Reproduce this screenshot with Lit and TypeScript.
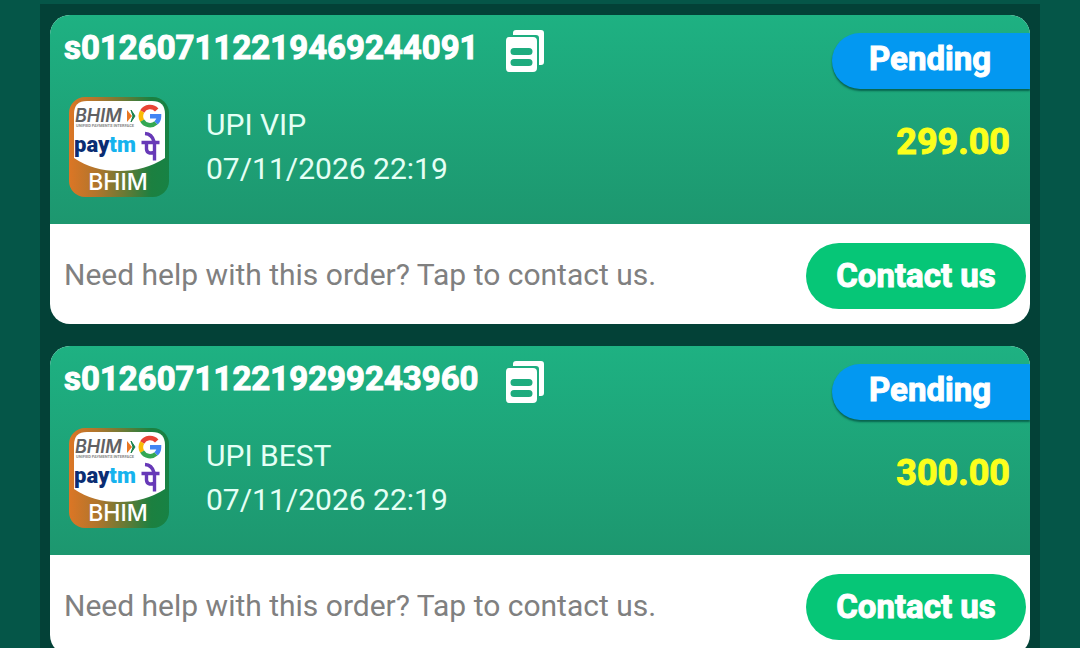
import { LitElement, html, css } from "lit";
import { customElement, property } from "lit/decorators.js";

interface Order {
  id: string;
  channel: string;
  time: string;
  amount: string;
  status: string;
}

const ORDERS: Order[] = [
  { id: "s012607112219469244091", channel: "UPI VIP", time: "07/11/2026 22:19", amount: "299.00", status: "Pending" },
  { id: "s012607112219299243960", channel: "UPI BEST", time: "07/11/2026 22:19", amount: "300.00", status: "Pending" },
];

@customElement("upi-logo")
class UpiLogo extends LitElement {
  static styles = css`
    :host { display: block; width: 100px; height: 100px; }
    .logo { display: block; width: 100%; height: 100%; }
    .mark { font: italic 600 18px "Inter", sans-serif; fill: #606163; }
    .tiny { font: 700 4px "Roboto", sans-serif; fill: #8a8a8a; }
    .paytm { font: 900 22px "Roboto", sans-serif; fill: #0a2d73; }
    .paytm-light { fill: #16b3ee; }
    .name { font: 500 23px "Inter", sans-serif; fill: #fff; }
  `;

  render() {
    return html`
      <svg class="logo" viewBox="0 0 100 100" role="img" aria-label="UPI">
        <defs>
          <linearGradient id="frame" x1="0" y1="0" x2="1" y2="0">
            <stop offset="0" stop-color="#dc7625" />
            <stop offset="0.28" stop-color="#b0752c" />
            <stop offset="0.55" stop-color="#6a7a35" />
            <stop offset="0.82" stop-color="#1c8040" />
            <stop offset="1" stop-color="#178244" />
          </linearGradient>
        </defs>
        <rect width="100" height="100" rx="16" fill="url(#frame)" />
        <path d="M18 4H83Q96 4 96 17V61Q76 74 50 74T5 61V17Q5 4 18 4Z" fill="#fff" />
        <text class="mark" x="6" y="25">BHIM</text>
        <path d="M58 13l5 6-5 6z" fill="#e87722" />
        <path d="M62 13l4 6-4 6 2-6z" fill="#16804a" stroke="#16804a" />
        <text class="tiny" x="7" y="30">UNIFIED PAYMENTS INTERFACE</text>
        <g fill="none" stroke-width="4.6">
          <path d="M87.700 13A9 9 0 0 0 73.200 14.500" stroke="#e84335" />
          <path d="M73.200 14.500A9 9 0 0 0 73.200 23.700" stroke="#fabb05" />
          <path d="M73.200 23.700A9 9 0 0 0 87 25.900" stroke="#34a853" />
          <path d="M87 25.900A9 9 0 0 0 90 19.200H81" stroke="#4285f4" />
        </g>
        <text class="paytm" x="5" y="55">pay<tspan class="paytm-light">tm</tspan></text>
        <path
          d="M76 36.500Q83 37 85 44.500M72.500 45.500H90.500M77.500 46V52Q78 57.500 85.500 55.500M85.500 45V63.500"
          fill="none" stroke="#6739b7" stroke-width="3.4"
        />
        <text class="name" x="49" y="93" text-anchor="middle">BHIM</text>
      </svg>
    `;
  }
}

@customElement("order-card")
class OrderCard extends LitElement {
  @property({ attribute: false }) order!: Order;

  static styles = css`
    :host { display: block; }
    .card { border-radius: 20px; overflow: hidden; background: #fff; }
    .head {
      display: flex;
      justify-content: space-between;
      height: 209px;
      background: linear-gradient(#1eb182, #1d976f);
      color: #fff;
    }
    .main { padding: 14px 0 0 14px; }
    .title { display: flex; align-items: flex-start; gap: 26px; height: 44px; }
    .strong { font-weight: 700; -webkit-text-stroke: 1px currentColor; }
    .id { margin: 0; font-size: 33px; line-height: 38px; }
    .copy {
      display: block;
      padding: 1px 0;
      border: 0;
      background: none;
      color: inherit;
      cursor: pointer;
    }
    .copy-icon { display: block; width: 40px; height: 42px; }
    .info { display: flex; align-items: center; gap: 37px; padding: 24px 5px 0; }
    .lines { font-size: 30px; line-height: 44px; color: #e4fff5; }
    .line { margin: 0; }
    .side { display: flex; flex-direction: column; align-items: flex-end; gap: 33px; padding-top: 18px; }
    .status {
      box-sizing: border-box;
      min-width: 198px;
      height: 56px;
      padding: 0 38px 0 37px;
      border-radius: 28px 0 0 28px;
      background: #0398f1;
      box-shadow: 0 2px 2px #08654f;
      font-size: 33px;
      line-height: 52px;
    }
    .amount { padding-right: 20px; font-size: 36px; line-height: 40px; color: #fcff1c; }
    .foot {
      display: flex;
      align-items: center;
      justify-content: space-between;
      height: 100px;
      padding: 4px 4px 0 14px;
      box-sizing: border-box;
    }
    .help { margin: 0; padding-bottom: 2px; font-size: 30px; line-height: 40px; color: #808080; }
    .contact {
      width: 220px;
      height: 66px;
      padding: 0;
      border: 0;
      border-radius: 33px;
      background: #06c677;
      color: #fff;
      font-family: inherit;
      font-size: 33px;
      line-height: 40px;
      cursor: pointer;
    }
  `;

  render() {
    const o = this.order;
    return html`
      <article class="card">
        <div class="head">
          <div class="main">
            <div class="title">
              <h2 class="id strong">${o.id}</h2>
              <button class="copy" aria-label="Copy order number">
                <svg class="copy-icon" viewBox="0 0 40 42" fill="currentColor" aria-hidden="true">
                  <path d="M8 5V3Q8 0 11 0H36Q39 0 39 3V32Q39 35 36 35H34V8Q34 5 31 5Z" />
                  <path
                    fill-rule="evenodd"
                    d="M4 7H28Q32 7 32 11V38Q32 42 28 42H4Q1 42 1 38V11Q1 7 4 7ZM9 18A3.500 3.500 0 0 0 9 25H24A3.500 3.500 0 0 0 24 18ZM9 29A3.500 3.500 0 0 0 9 36H24A3.500 3.500 0 0 0 24 29Z"
                  />
                </svg>
              </button>
            </div>
            <div class="info">
              <upi-logo></upi-logo>
              <div class="lines">
                <p class="line">${o.channel}</p>
                <p class="line">${o.time}</p>
              </div>
            </div>
          </div>
          <div class="side">
            <div class="status strong">${o.status}</div>
            <div class="amount strong">${o.amount}</div>
          </div>
        </div>
        <div class="foot">
          <p class="help">Need help with this order? Tap to contact us.</p>
          <button class="contact strong">Contact us</button>
        </div>
      </article>
    `;
  }
}

@customElement("app-root")
class AppRoot extends LitElement {
  static styles = css`
    :host {
      display: block;
      box-sizing: border-box;
      height: 100vh;
      overflow: hidden;
      padding: 4px 40px 0;
      background: #055648;
      font-family: "Roboto", sans-serif;
    }
    .list {
      display: flex;
      flex-direction: column;
      gap: 22px;
      padding: 11px 10px 22px;
      background: #034137;
    }
  `;

  render() {
    return html`
      <main class="list">
        ${ORDERS.map((order) => html`<order-card .order=${order}></order-card>`)}
      </main>
    `;
  }
}
